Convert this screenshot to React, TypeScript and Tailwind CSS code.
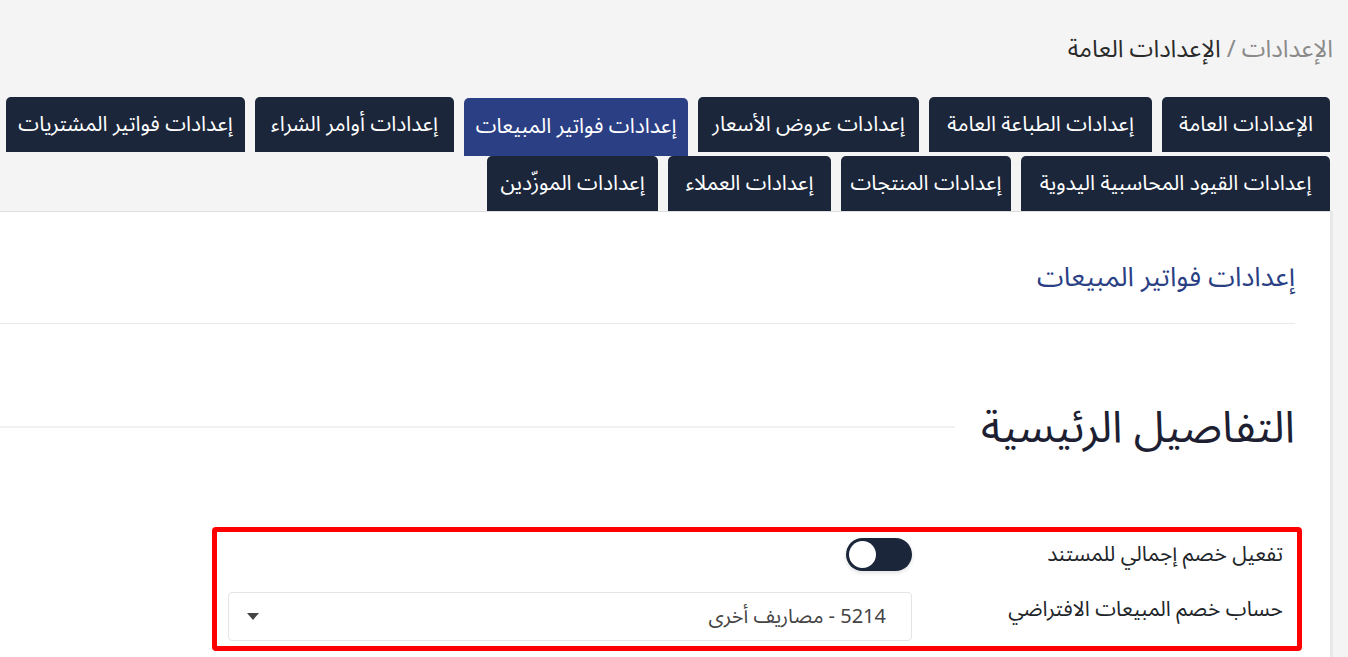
import { useState } from 'react';

const rowOne = [
  { label: 'الإعدادات العامة', w: 'w-[168px]' },
  { label: 'إعدادات الطباعة العامة', w: 'w-[223px]' },
  { label: 'إعدادات عروض الأسعار', w: 'w-[221px]' },
  { label: 'إعدادات فواتير المبيعات', w: 'w-[224px]', active: true },
  { label: 'إعدادات أوامر الشراء', w: 'w-[199px]' },
  { label: 'إعدادات فواتير المشتريات', w: 'w-[239px]' },
];

const rowTwo = [
  { label: 'إعدادات القيود المحاسبية اليدوية', w: 'w-[309px]' },
  { label: 'إعدادات المنتجات', w: 'w-[170px]' },
  { label: 'إعدادات العملاء', w: 'w-[163px]' },
  { label: 'إعدادات الموزّدين', w: 'w-[171px]' },
];

function Tab({ label, w, active }: { label: string; w: string; active?: boolean }) {
  return (
    <button
      type="button"
      className={
        active
          ? `${w} h-[58px] mt-[1px] rounded-t-[5px] bg-[#2b3f85] text-white text-[21px] flex items-center justify-center whitespace-nowrap`
          : `${w} h-[55px] rounded-t-[5px] bg-[#1b263a] text-white text-[21px] flex items-center justify-center whitespace-nowrap`
      }
    >
      {label}
    </button>
  );
}

export default function App() {
  const [discountEnabled, setDiscountEnabled] = useState(false);

  return (
    <div
      dir="rtl"
      className="min-h-screen bg-[#f4f4f4] font-['Noto_Sans_Arabic','DejaVu_Sans',sans-serif] text-[#212529]"
    >
      {/* breadcrumb */}
      <div className="pt-[34px] pr-[15px] text-[24px] leading-[32px]">
        <span className="text-[#8a8a8a]">الإعدادات</span>
        <span className="text-[#8a8a8a] mx-[6px]">/</span>
        <span className="text-[#2a2a2a]">الإعدادات العامة</span>
      </div>

      {/* tabs */}
      <div className="mt-[31px] mr-[18px] ml-[5px]">
        <div className="flex items-start gap-x-[10px]">
          {rowOne.map((t) => (
            <Tab key={t.label} {...t} />
          ))}
        </div>
        <div className="flex items-start gap-x-[10px]">
          {rowTwo.map((t) => (
            <Tab key={t.label} {...t} />
          ))}
        </div>
      </div>

      {/* panel */}
      <div className="mr-[15px] bg-white border-t border-[#dedede] border-r-[3px] border-r-[#e8e8e8] pr-[35px] pt-[48px] pb-[40px]">
        <h2 className="text-[27px] leading-[36px] text-[#2b3f85]">إعدادات فواتير المبيعات</h2>
        <div className="mt-[27px] h-px bg-[#e9e9e9]" />

        <div className="mt-[76px] flex items-center">
          <h3 className="text-[44px] leading-[56px] text-[#1e1f33] whitespace-nowrap">التفاصيل الرئيسية</h3>
          <div className="flex-1 h-[2px] bg-[#f1f1f1] mr-[26px] -mt-[2px]" />
        </div>

        <div className="mt-[71px] mr-[-7px] w-[1090px] border-[5px] border-[#ff0000] rounded-[4px] pr-[14px] pl-[11px] pt-[6px] pb-[5px]">
          <div className="grid grid-cols-[353px_684px] gap-x-[18px] gap-y-[21px]">
            <label className="text-[21px] leading-[33px]">تفعيل خصم إجمالي للمستند</label>
            <div className="flex">
              <button
                type="button"
                onClick={() => setDiscountEnabled(!discountEnabled)}
                className={
                  discountEnabled
                    ? 'w-[66px] h-[33px] rounded-full bg-[#1b263a] p-[3px] flex justify-start shadow-[0_2px_4px_rgba(0,0,0,0.12)]'
                    : 'w-[66px] h-[33px] rounded-full bg-[#1b263a] p-[3px] flex justify-end shadow-[0_2px_4px_rgba(0,0,0,0.12)]'
                }
              >
                <span className="block w-[27px] h-[27px] rounded-full bg-white" />
              </button>
            </div>

            <label className="text-[21px] leading-[33px] pt-[1px]">حساب خصم المبيعات الافتراضي</label>
            <div className="h-[49px] border border-[#e4e4e4] rounded-[4px] flex items-center justify-between pr-[25px] pl-[18px]">
              <span className="text-[20px] text-[#444]">5214 - مصاريف أخرى</span>
              <span className="w-0 h-0 border-l-[6px] border-r-[6px] border-t-[7px] border-l-transparent border-r-transparent border-t-[#444]" />
            </div>
          </div>
        </div>
      </div>
    </div>
  );
}
